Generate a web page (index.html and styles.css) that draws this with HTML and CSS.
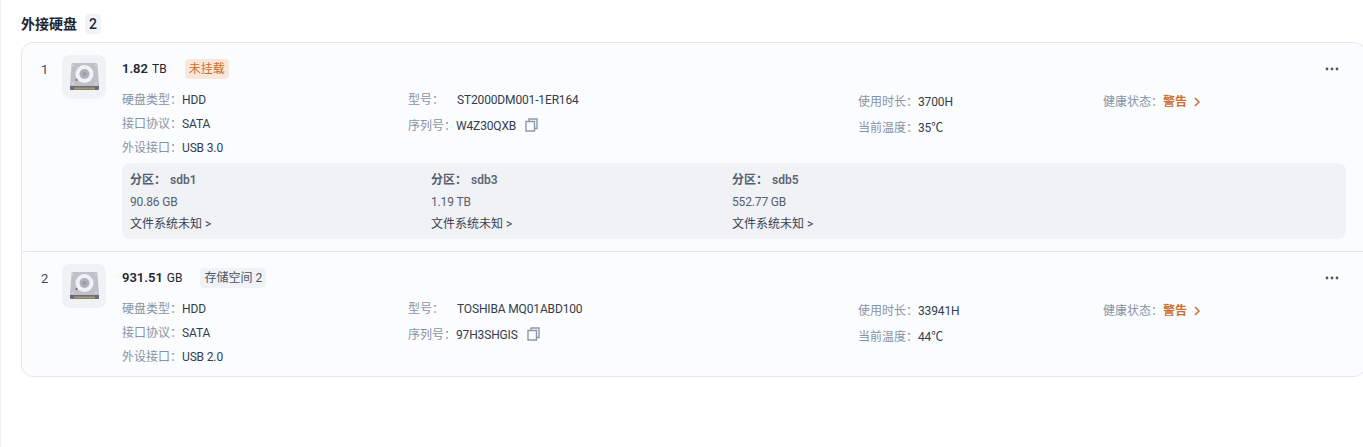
FILE: index.html
```html
<!DOCTYPE html>
<html lang="zh-CN">
<head>
<meta charset="utf-8">
<title>外接硬盘</title>
<link rel="stylesheet" href="styles.css">
</head>
<body>
<main class="page">
  <h2 class="heading"><span>外接硬盘</span><span class="count">2</span></h2>
  <section class="card">
    <article class="disk">
      <div class="index">1</div>
      <div class="thumb">
        <svg viewBox="0 0 29 28" width="29" height="28"><path d="M3 0h23a1.500 1.500 0 0 1 1.500 1.500L29 23H0L1.500 1.500A1.500 1.500 0 0 1 3 0z" fill="#bfc1ca"/><path d="M0 23h29v3a1 1 0 0 1-1 1H1a1 1 0 0 1-1-1z" fill="#686c78"/><path d="M4.500 25.500H25" stroke="#d9b65a" stroke-width="2" stroke-dasharray="1.200 .8"/><circle cx="14.500" cy="11" r="9" fill="#f1f2f5"/><circle cx="14.500" cy="11" r="5" fill="#aeb0ba"/><circle cx="14.500" cy="11" r="2" fill="#9b9ea9"/><circle cx="6.500" cy="17" r="1" fill="#5f636e"/><circle cx="3" cy="2.500" r=".8" fill="#e6e7eb"/><circle cx="26" cy="2.500" r=".8" fill="#e6e7eb"/><circle cx="3" cy="20.500" r=".8" fill="#e6e7eb"/><circle cx="26" cy="20.500" r=".8" fill="#e6e7eb"/></svg>
      </div>
      <div class="body">
        <div class="title"><strong>1.82</strong><span class="unit">TB</span><span class="tag tag-warn">未挂载</span></div>
        <div class="specs">
          <div class="col col-a">
            <p><span class="k">硬盘类型：</span>HDD</p>
            <p><span class="k">接口协议：</span>SATA</p>
            <p><span class="k">外设接口：</span>USB 3.0</p>
          </div>
          <div class="col col-b">
            <p><span class="k k-wide">型号：</span>ST2000DM001-1ER164</p>
            <p><span class="k">序列号：</span>W4Z30QXB<svg class="copy" viewBox="0 0 13 14" width="13" height="14"><path d="M4 3V1h8v9.500H9.500M1 3.500h8.500V13H1z" fill="none" stroke="#8d99ab" stroke-width="1.400"/></svg></p>
          </div>
          <div class="col col-c">
            <p><span class="k">使用时长：</span>3700H</p>
            <p><span class="k">当前温度：</span>35℃</p>
          </div>
          <div class="col col-d">
            <p><span class="k">健康状态：</span><b class="warn">警告</b><svg class="chev" viewBox="0 0 8 10" width="8" height="10"><path d="M2 1l4 4-4 4" fill="none" stroke="#c96f2e" stroke-width="1.500"/></svg></p>
          </div>
        </div>
        <div class="parts">
          <div class="part"><p class="pname"><b>分区：</b><span>sdb1</span></p><p>90.86 GB</p><p class="fs">文件系统未知 &gt;</p></div>
          <div class="part"><p class="pname"><b>分区：</b><span>sdb3</span></p><p>1.19 TB</p><p class="fs">文件系统未知 &gt;</p></div>
          <div class="part"><p class="pname"><b>分区：</b><span>sdb5</span></p><p>552.77 GB</p><p class="fs">文件系统未知 &gt;</p></div>
        </div>
      </div>
      <svg class="more" viewBox="0 0 14 4" width="14" height="4"><circle cx="2" cy="2" r="1.400"/><circle cx="7" cy="2" r="1.400"/><circle cx="12" cy="2" r="1.400"/></svg>
    </article>
    <article class="disk">
      <div class="index">2</div>
      <div class="thumb">
        <svg viewBox="0 0 29 28" width="29" height="28"><path d="M3 0h23a1.500 1.500 0 0 1 1.500 1.500L29 23H0L1.500 1.500A1.500 1.500 0 0 1 3 0z" fill="#bfc1ca"/><path d="M0 23h29v3a1 1 0 0 1-1 1H1a1 1 0 0 1-1-1z" fill="#686c78"/><path d="M4.500 25.500H25" stroke="#d9b65a" stroke-width="2" stroke-dasharray="1.200 .8"/><circle cx="14.500" cy="11" r="9" fill="#f1f2f5"/><circle cx="14.500" cy="11" r="5" fill="#aeb0ba"/><circle cx="14.500" cy="11" r="2" fill="#9b9ea9"/><circle cx="6.500" cy="17" r="1" fill="#5f636e"/><circle cx="3" cy="2.500" r=".8" fill="#e6e7eb"/><circle cx="26" cy="2.500" r=".8" fill="#e6e7eb"/><circle cx="3" cy="20.500" r=".8" fill="#e6e7eb"/><circle cx="26" cy="20.500" r=".8" fill="#e6e7eb"/></svg>
      </div>
      <div class="body">
        <div class="title"><strong>931.51</strong><span class="unit">GB</span><span class="tag">存储空间 2</span></div>
        <div class="specs">
          <div class="col col-a">
            <p><span class="k">硬盘类型：</span>HDD</p>
            <p><span class="k">接口协议：</span>SATA</p>
            <p><span class="k">外设接口：</span>USB 2.0</p>
          </div>
          <div class="col col-b">
            <p><span class="k k-wide">型号：</span>TOSHIBA MQ01ABD100</p>
            <p><span class="k">序列号：</span>97H3SHGIS<svg class="copy" viewBox="0 0 13 14" width="13" height="14"><path d="M4 3V1h8v9.500H9.500M1 3.500h8.500V13H1z" fill="none" stroke="#8d99ab" stroke-width="1.400"/></svg></p>
          </div>
          <div class="col col-c">
            <p><span class="k">使用时长：</span>33941H</p>
            <p><span class="k">当前温度：</span>44℃</p>
          </div>
          <div class="col col-d">
            <p><span class="k">健康状态：</span><b class="warn">警告</b><svg class="chev" viewBox="0 0 8 10" width="8" height="10"><path d="M2 1l4 4-4 4" fill="none" stroke="#c96f2e" stroke-width="1.500"/></svg></p>
          </div>
        </div>
      </div>
      <svg class="more" viewBox="0 0 14 4" width="14" height="4"><circle cx="2" cy="2" r="1.400"/><circle cx="7" cy="2" r="1.400"/><circle cx="12" cy="2" r="1.400"/></svg>
    </article>
  </section>
</main>
</body>
</html>
```
FILE: styles.css
```css
* { box-sizing: border-box; }
html, body { margin: 0; height: 100%; overflow: hidden; background: #fff; }
body { font: 12px/20px Roboto, "Noto Sans CJK SC", sans-serif; color: #333c4d; }
p { margin: 0; }
.page { height: 447px; border-left: 1px solid #f0f1f3; padding: 14px 0 0 20px; width: 1372px; }
.heading { display: flex; align-items: center; gap: 8px; margin: 0 0 8px; height: 20px; font-size: 14px; font-weight: 700; color: #1f2633; }
.count { background: #f2f4f7; border-radius: 4px; padding: 0 4px; min-width: 16px; text-align: center; line-height: 20px; font-weight: 500; font-size: 14px; }
.card { width: 1345px; border: 1px solid #e4e7ec; border-radius: 12px; background: #fbfcfe; }
.disk { display: flex; position: relative; padding: 12px 19px 0 19px; }
.disk + .disk { border-top: 1px solid #e4e7ec; height: 125px; }
.disk:first-child { height: 208px; }
.index { width: 21px; font-size: 13px; line-height: 29px; color: #3f4a5c; }
.thumb { width: 44px; height: 44px; border-radius: 8px; background: #f0f2f5; display: flex; align-items: center; justify-content: center; flex: none; }
.body { flex: 1; margin-left: 16px; }
.title { display: flex; align-items: center; height: 28px; color: #1f2633; }
.title strong { font-size: 13px; font-weight: 600; }
.unit { margin-left: 4px; font-size: 12px; }
.tag { margin-left: 18px; padding: 0 4px; height: 20px; line-height: 20px; border-radius: 4px; background: #f0f2f5; color: #4b5565; }
.tag-warn { background: #fbe6da; color: #c96f2e; }
.specs { display: flex; margin-top: 7px; height: 63px; }
.col-a { width: 286px; }
.col-a p { height: 23.750px; }
.col-b { width: 450px; }
.col-b p { height: 26px; }
.col-c { width: 245px; padding-top: 2px; }
.col-c p { height: 26px; }
.col-d { padding-top: 2px; }
.col p { white-space: nowrap; letter-spacing: -0.150px; }
.k { color: #8793a5; letter-spacing: 0; }
.k-wide { display: inline-block; width: 49px; }
.copy { margin-left: 9px; vertical-align: -2px; }
.warn { color: #c96f2e; font-weight: 600; letter-spacing: 0; }
.chev { margin-left: 6px; vertical-align: -1px; }
.parts { display: flex; margin-top: 10px; height: 76px; background: #f0f2f5; border-radius: 8px; padding: 6px 8px; }
.part { width: 301px; line-height: 22px; color: #565f6e; letter-spacing: -0.150px; }
.pname { display: flex; gap: 4px; letter-spacing: 0; }
.pname b { font-weight: 600; }
.pname span { font-weight: 600; color: #5d6676; }
.fs { color: #3a4150; letter-spacing: 0; }
.more { position: absolute; top: 24px; right: 26px; fill: #4f5868; }
```
